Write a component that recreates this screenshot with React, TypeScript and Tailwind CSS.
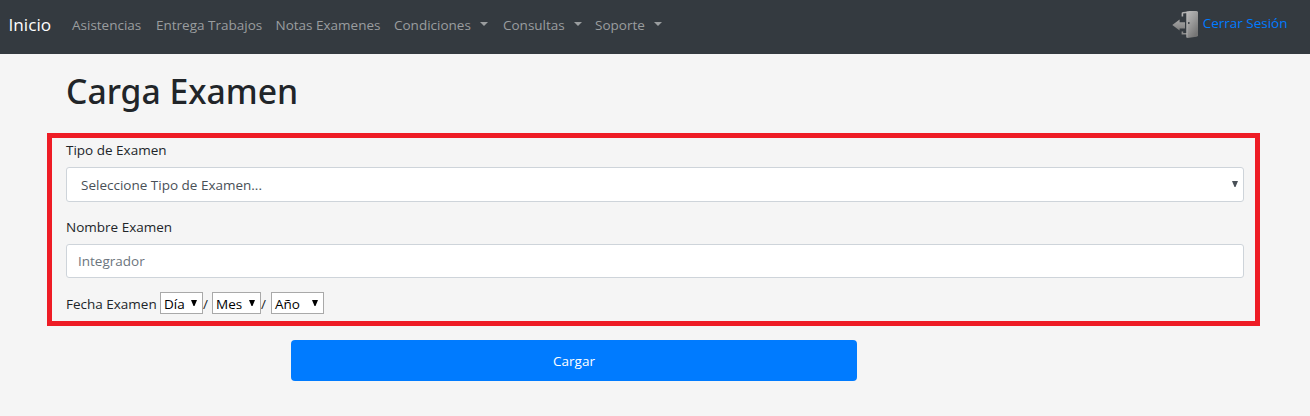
const links = [
  { label: "Asistencias", width: "w-[84px]", menu: false },
  { label: "Entrega Trabajos", width: "w-[119.5px]", menu: false },
  { label: "Notas Examenes", width: "w-[118.5px]", menu: false },
  { label: "Condiciones", width: "w-[109px]", menu: true },
  { label: "Consultas", width: "w-[92px]", menu: true },
  { label: "Soporte", width: "w-[80px]", menu: true },
];

function Arrow({ className }: { className: string }) {
  return (
    <svg viewBox="0 0 6 6" className={`h-1.5 w-1.5 shrink-0 ${className}`} fill="currentColor" aria-hidden="true">
      <path d="M0 0H6L3.5 6H2.5Z" />
    </svg>
  );
}

function DoorIcon() {
  return (
    <svg viewBox="0 0 27 29" className="h-[29px] w-[27px]" aria-hidden="true">
      <defs>
        <linearGradient id="door" x1="0" y1="0" x2="0.6" y2="1">
          <stop offset="0" stopColor="#bcbcbc" />
          <stop offset="0.5" stopColor="#9c9c9c" />
          <stop offset="1" stopColor="#757575" />
        </linearGradient>
        <linearGradient id="arrow" x1="0" y1="0" x2="0" y2="1">
          <stop offset="0" stopColor="#a6a6a6" />
          <stop offset="1" stopColor="#7d7d7d" />
        </linearGradient>
      </defs>
      <path d="M10.4 6.5V3.4Q10.4 2.8 11 2.8L16 2.2" fill="none" stroke="#b0b0b0" strokeWidth="1.6" />
      <path d="M10.4 21.5V23.8H15" fill="none" stroke="#8c8c8c" strokeWidth="1.6" />
      <path d="M14.5 1.8L17 1H24.5L26 1.8V26L24.5 26.8L15.5 28L14.5 27.5Z" fill="url(#door)" />
      <path d="M14.9 2V27.4" stroke="#bdbdbd" strokeWidth="0.7" />
      <path d="M0.3 15L7.6 9.6V12.3H13V18.4H7.6V20.6Z" fill="url(#arrow)" />
      <circle cx="16.8" cy="13" r="0.9" fill="#343a40" />
    </svg>
  );
}

function DateSelect({ label, className }: { label: string; className: string }) {
  return (
    <button type="button" className={`flex h-[22px] items-center justify-between border border-[#a9a9a9] bg-white pl-[3px] pr-[5px] text-black ${className}`}>
      <span className="pt-0.5">{label}</span>
      <Arrow className="mt-0" />
    </button>
  );
}

export default function App() {
  return (
    <div className="h-[416px] overflow-hidden bg-[#f5f5f5] font-['Open_Sans','Noto_Sans',sans-serif] text-[13.5px] leading-[22px] text-[#212529]">
      <nav className="flex h-[54px] items-center bg-[#343a40] pr-[22.5px]">
        <a className="w-[72px] pb-1 pl-[8.5px] text-[17.2px] text-white">Inicio</a>
        <div className="flex pb-[5px] text-[#9a9d9f]">
          {links.map((l) => (
            <a key={l.label} className={`flex items-center ${l.width}`}>
              {l.label}
              {l.menu && (
                <svg viewBox="0 0 8 4" className="-mt-0.5 ml-[9px] h-1 w-2" fill="currentColor" aria-hidden="true">
                  <path d="M0 0H8L4 4Z" />
                </svg>
              )}
            </a>
          ))}
        </div>
        <a className="ml-auto flex items-center gap-1 pb-[6px] text-[#007bff]">
          <DoorIcon />
          <span className="pb-0.5">Cerrar Sesión</span>
        </a>
      </nav>

      <h1 className="ml-[66px] mt-[15px] h-[45px] font-['Noto_Sans',sans-serif] text-[33.7px] font-medium leading-[44px]">Carga Examen</h1>

      <form className="ml-[47px] mt-[19px] h-[193px] w-[1213px] border-[5px] border-[#ee1c25] pl-[14px] pr-[11px] pt-px">
        <label className="block h-[28px]">Tipo de Examen</label>
        <button type="button" className="flex h-[35px] w-full items-center justify-between rounded-[3px] border border-[#ced4da] bg-white pl-[14px] pr-[5px] text-[#495057]">
          <span>Seleccione Tipo de Examen...</span>
          <Arrow className="-mt-0.5" />
        </button>
        <label className="mt-[14px] block h-[28px]">Nombre Examen</label>
        <input
          type="text"
          placeholder="Integrador"
          className="block h-[34px] w-full rounded-[3px] border border-[#ced4da] bg-white px-[11px] placeholder:text-[#6c757d]"
        />
        <div className="mt-[14px] flex items-center">
          <span className="w-[94px] translate-y-px">Fecha Examen</span>
          <DateSelect label="Día" className="w-[43px]" />
          <span className="w-[9px] translate-y-px">/</span>
          <DateSelect label="Mes" className="w-[49px]" />
          <span className="w-[10px] translate-y-px">/</span>
          <DateSelect label="Año" className="w-[53px]" />
        </div>
      </form>

      <button type="button" className="ml-[291px] mt-[14px] block h-[41px] w-[566px] rounded-[4px] bg-[#007bff] text-white">
        Cargar
      </button>
    </div>
  );
}
